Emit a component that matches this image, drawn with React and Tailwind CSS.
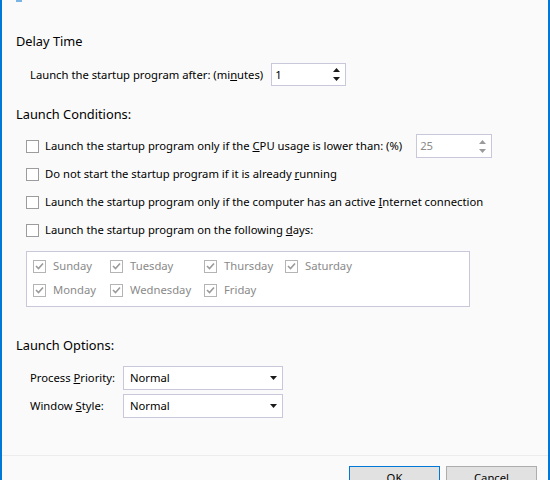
import React from "react";

const font = { fontFamily: '"Noto Sans", "Open Sans", sans-serif' };

function Up({ color }) {
  return (
    <svg width="7" height="4" viewBox="0 0 7 4"><path d="M0 4 L3.5 0 L7 4 Z" fill={color} /></svg>
  );
}
function Down({ color }) {
  return (
    <svg width="7" height="4" viewBox="0 0 7 4"><path d="M0 0 L7 0 L3.5 4 Z" fill={color} /></svg>
  );
}

function Spin({ value, disabled, className }) {
  const c = disabled ? "#9a9a9a" : "#1a1a1a";
  return (
    <div className={"flex items-center justify-between bg-white border border-[#c9c7da] pl-[3px] pr-[5px] shrink-0 " + className}>
      <span className={disabled ? "text-[#8a8a8a]" : "text-black"}>{value}</span>
      <div className="flex flex-col gap-[5px]">
        <Up color={c} />
        <Down color={c} />
      </div>
    </div>
  );
}

function Box() {
  return <div className="w-[13px] h-[13px] border border-[#9c9c9c] bg-white shrink-0" />;
}

function CheckedDisabled() {
  return (
    <div className="w-[13px] h-[13px] border border-[#b4b4b4] bg-white shrink-0 flex items-center justify-center">
      <svg width="9" height="8" viewBox="0 0 9 8"><path d="M1 4 L3.5 6.5 L8 1.5" stroke="#9a9a9a" strokeWidth="1.6" fill="none" /></svg>
    </div>
  );
}

function Day({ label, w }) {
  return (
    <div className={"flex items-center gap-[7px] " + w}>
      <CheckedDisabled />
      <span className="text-[#8a8a8a]">{label}</span>
    </div>
  );
}

function Select({ value }) {
  return (
    <div className="w-[160px] h-[24px] bg-white border border-[#c9c7da] flex items-center justify-between pl-[6px] pr-[5px]">
      <span className="text-black">{value}</span>
      <svg width="7" height="4" viewBox="0 0 7 4"><path d="M0 0 L7 0 L3.5 4 Z" fill="#1a1a1a" /></svg>
    </div>
  );
}

export default function App() {
  return (
    <div style={font} className="w-[550px] h-[480px] bg-[#fafafa] border-l-2 border-r-2 border-[#0078d7] text-[11.25px] text-black overflow-hidden flex flex-col leading-none [&>*]:shrink-0">
      <div className="h-[2px] w-[6px] ml-[14px] bg-[#7ab4e4]" />
      <div className="pl-[14px] mt-[30px] text-[12.8px] h-[18px] flex items-center">Delay Time</div>
      <div className="flex items-center pl-[28px] mt-[13px] h-[23px]">
        <span>Launch the startup program after: (mi<u>n</u>utes)</span>
        <Spin value="1" className="ml-[8px] w-[75px] h-[23px]" />
      </div>
      <div className="pl-[14px] mt-[19px] text-[12.8px] h-[18px] flex items-center">Launch Conditions:</div>
      <div className="mt-[9px] flex flex-col">
        <div className="flex items-center h-[28px] pl-[24px] gap-[6px]">
          <Box />
          <span>Launch the startup program only if the <u>C</u>PU usage is lower than: (%)</span>
          <Spin value="25" disabled className="ml-[8px] w-[76px] h-[24px]" />
        </div>
        <div className="flex items-center h-[28px] pl-[24px] gap-[6px]">
          <Box />
          <span>Do not start the startup program if it is already <u>r</u>unning</span>
        </div>
        <div className="flex items-center h-[28px] pl-[24px] gap-[6px]">
          <Box />
          <span>Launch the startup program only if the computer has an active <u>I</u>nternet connection</span>
        </div>
        <div className="flex items-center h-[28px] pl-[24px] gap-[6px]">
          <Box />
          <span>Launch the startup program on the following <u>d</u>ays:</span>
        </div>
      </div>
      <div className="ml-[24px] mt-[7px] w-[444px] h-[56px] bg-white border border-[#c9c7da] pl-[6px] pt-[6px] flex flex-col gap-[8px]">
        <div className="flex items-center h-[16px]">
          <Day label="Sunday" w="w-[77px]" />
          <Day label="Tuesday" w="w-[94px]" />
          <Day label="Thursday" w="w-[81px]" />
          <Day label="Saturday" w="w-[80px]" />
        </div>
        <div className="flex items-center h-[16px]">
          <Day label="Monday" w="w-[77px]" />
          <Day label="Wednesday" w="w-[94px]" />
          <Day label="Friday" w="w-[81px]" />
        </div>
      </div>
      <div className="pl-[14px] mt-[29px] text-[12.8px] h-[18px] flex items-center">Launch Options:</div>
      <div className="mt-[12px] flex flex-col gap-[4px] pl-[28px]">
        <div className="flex items-center">
          <span className="w-[93px]">Process <u>P</u>riority:</span>
          <Select value="Normal" />
        </div>
        <div className="flex items-center">
          <span className="w-[93px]">Window <u>S</u>tyle:</span>
          <Select value="Normal" />
        </div>
      </div>
      <div className="mt-[37px] h-[1px] bg-[#ececec]" />
      <div className="flex justify-end gap-[6px] pr-[11px] mt-[10px]">
        <div className="w-[91px] h-[24px] bg-[#e1e1e1] border border-[#0078d7] flex items-center justify-center">OK</div>
        <div className="w-[91px] h-[24px] bg-[#e1e1e1] border border-[#adadad] flex items-center justify-center">Cancel</div>
      </div>
    </div>
  );
}
